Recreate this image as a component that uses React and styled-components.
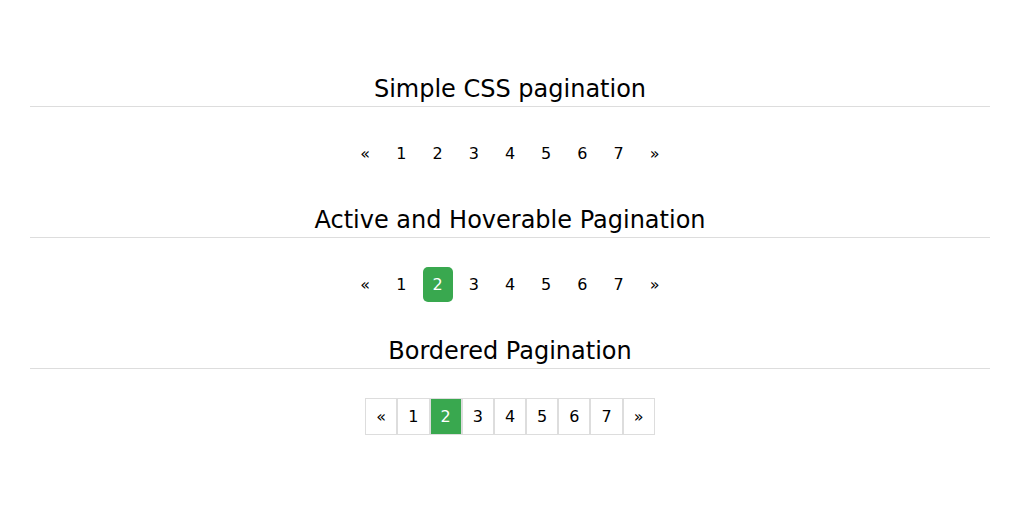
import React from "react";
import styled, { createGlobalStyle } from "styled-components";

const Global = createGlobalStyle`
  html, body { margin: 0; padding: 0; background: #fff; }
  body { font-family: "DejaVu Sans", Verdana, sans-serif; color: #000; }
`;

const Page = styled.div`
  width: 960px;
  margin-left: 30px;
  padding-top: 74px;
`;

const Section = styled.section`
  display: flex;
  flex-direction: column;
  margin-bottom: 33.6px;
`;

const Title = styled.h2`
  margin: 0;
  font-size: 24px;
  font-weight: normal;
  line-height: 30px;
  text-align: center;
  padding-bottom: 2px;
  border-bottom: 1px solid #ddd;
`;

const Pager = styled.nav`
  display: flex;
  justify-content: center;
  gap: ${(p) => (p.$bordered ? "0" : "6px")};
  margin-top: 29px;
`;

const PageLink = styled.a`
  display: block;
  font-size: 16px;
  line-height: 19.4px;
  padding: 8px 10px;
  min-width: 10.2px;
  text-align: center;
  color: ${(p) => (p.$active ? "#fff" : "#000")};
  background: ${(p) => (p.$active ? "#39a84f" : "transparent")};
  border-radius: ${(p) => (p.$active && !p.$bordered ? "5px" : "0")};
  border: ${(p) => (p.$bordered ? "1px solid #ddd" : "none")};
  text-decoration: none;
  cursor: pointer;
`;

const items = ["«", "1", "2", "3", "4", "5", "6", "7", "»"];

function Pagination({ active, bordered }) {
  return (
    <Pager $bordered={bordered}>
      {items.map((it, i) => (
        <PageLink key={i} $active={it === active} $bordered={bordered}>
          {it}
        </PageLink>
      ))}
    </Pager>
  );
}

export default function App() {
  return (
    <>
      <Global />
      <Page>
        <Section>
          <Title>Simple CSS pagination</Title>
          <Pagination />
        </Section>
        <Section>
          <Title>Active and Hoverable Pagination</Title>
          <Pagination active="2" />
        </Section>
        <Section>
          <Title>Bordered Pagination</Title>
          <Pagination active="2" bordered />
        </Section>
      </Page>
    </>
  );
}
